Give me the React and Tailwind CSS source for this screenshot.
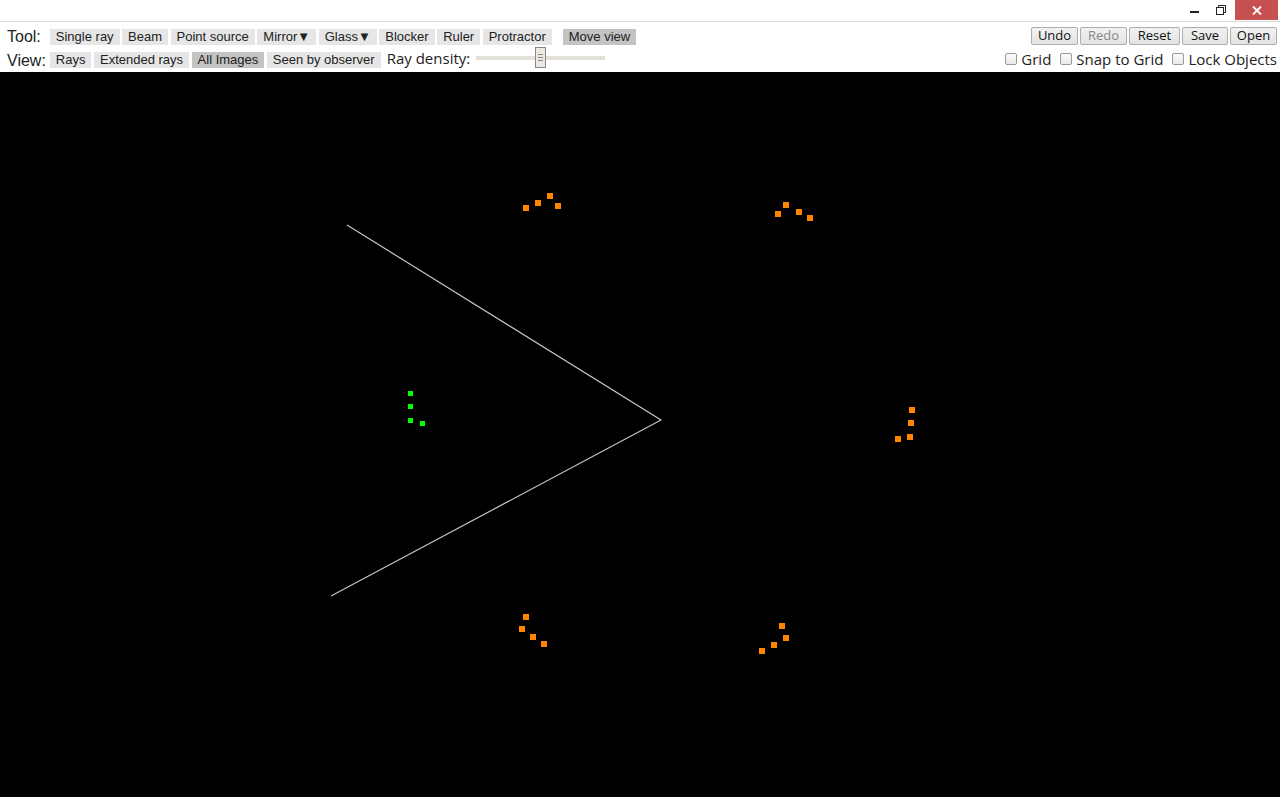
import { memo } from "react";

const SANS = { fontFamily: '"Liberation Sans", Arial, sans-serif' };
const UI = { fontFamily: '"Open Sans", "Noto Sans", sans-serif' };

const toolButtons = [
  "Single ray",
  "Beam",
  "Point source",
  "Mirror▼",
  "Glass▼",
  "Blocker",
  "Ruler",
  "Protractor",
];

const viewButtons = ["Rays", "Extended rays", "All Images", "Seen by observer"];

const actionButtons = [
  { label: "Undo", w: "w-[47px]" },
  { label: "Redo", w: "w-[47px]", disabled: true },
  { label: "Reset", w: "w-[51px]" },
  { label: "Save", w: "w-[46px]" },
  { label: "Open", w: "w-[47px]" },
];

// image dots, top-left corners in page coords
const orangeDots = [
  [523, 205], [535, 200], [547, 193], [555, 203],
  [775, 211], [783, 202], [796, 209], [807, 215],
  [909, 407], [908, 420], [907, 434], [895, 436],
  [523, 614], [519, 626], [530, 634], [541, 641],
  [779, 623], [783, 635], [771, 642], [759, 648],
];

const greenDots = [
  [408, 391], [408, 404], [408, 418], [420, 421],
];

const FlatButton = memo(({ label, active }) => (
  <span
    className={`h-[16px] leading-[16px] px-[6px] text-[13px] text-[#222] whitespace-nowrap ${
      active ? "bg-[#c3c3c3]" : "bg-[#e6e6e6]"
    }`}
    style={SANS}
  >
    {label}
  </span>
));

const Checkbox = memo(({ label }) => (
  <label className="flex items-center gap-[4px] text-[15px] text-[#222]" style={UI}>
    <span className="w-[12px] h-[12px] rounded-[2px] border border-[#9a9a9a] bg-gradient-to-b from-[#fcfcfc] to-[#e8e8e8]" />
    <span className="leading-[20px]">{label}</span>
  </label>
));

function TitleBar() {
  return (
    <div className="h-[22px] border-b border-[#dadada] flex justify-end items-start">
      <div className="w-[26px] h-[20px] flex items-center justify-center">
        <span className="block w-[9px] h-[2px] bg-[#222] mt-[4px]" />
      </div>
      <div className="w-[28px] h-[20px] flex items-center justify-center">
        <svg width="10" height="10" viewBox="0 0 10 10">
          <rect x="0.5" y="2.5" width="7" height="7" fill="none" stroke="#222" />
          <path d="M2.5 2.5V0.5H9.5V7.5H7.5" fill="none" stroke="#222" />
        </svg>
      </div>
      <div className="w-[43px] h-[20px] mr-[2px] bg-[#c75050] flex items-center justify-center">
        <svg width="10" height="9" viewBox="0 0 10 9">
          <path d="M1 0.5L9 8.5M9 0.5L1 8.5" stroke="#fff" strokeWidth="1.8" />
        </svg>
      </div>
    </div>
  );
}

function Toolbar() {
  return (
    <div className="h-[50px] flex flex-col">
      <div className="h-[25px] flex justify-between items-start">
        <div className="flex items-start ml-[7px]">
          <span className="mt-[5px] text-[16px] text-[#222] mr-[9px] leading-[19px]" style={SANS}>
            Tool:
          </span>
          <div className="mt-[7px] flex gap-[2.5px]">
            {toolButtons.map((b) => (
              <FlatButton key={b} label={b} />
            ))}
          </div>
          <div className="mt-[7px] ml-[11px] flex">
            <FlatButton label="Move view" active />
          </div>
        </div>
        <div className="flex gap-[2px] mt-[5px] mr-[3px]">
          {actionButtons.map((b) => (
            <span
              key={b.label}
              className={`${b.w} h-[18px] flex items-center justify-center rounded-[2px] border border-[#adadad] bg-gradient-to-b from-[#f2f2f2] to-[#e3e3e3] text-[13px] ${
                b.disabled ? "text-[#8a8a8a]" : "text-[#111]"
              }`}
              style={UI}
            >
              {b.label}
            </span>
          ))}
        </div>
      </div>
      <div className="h-[25px] flex justify-between items-start">
        <div className="flex items-start ml-[7px]">
          <span className="mt-[4px] text-[16px] text-[#222] mr-[4px] leading-[19px]" style={SANS}>
            View:
          </span>
          <div className="mt-[5px] flex gap-[2.5px]">
            {viewButtons.map((b) => (
              <FlatButton key={b} label={b} active={b === "All Images"} />
            ))}
          </div>
          <span className="mt-[2px] ml-[6px] text-[15px] text-[#222] leading-[19px]" style={UI}>
            Ray density:
          </span>
          <div className="relative ml-[6px] w-[129px] h-[22px] flex items-center">
            <div className="w-full h-[4px] bg-[#e4e0da]" />
            <div className="absolute left-[59px] top-0 w-[11px] h-[21px] border border-[#8a8680] bg-[#ece9e4] flex flex-col items-center justify-center gap-[2px]">
              <span className="block w-[5px] h-px bg-[#8a8680]" />
              <span className="block w-[5px] h-px bg-[#8a8680]" />
              <span className="block w-[5px] h-px bg-[#8a8680]" />
            </div>
          </div>
        </div>
        <div className="flex items-center gap-[9px] mt-[2px] mr-[3px]">
          <Checkbox label="Grid" />
          <Checkbox label="Snap to Grid" />
          <Checkbox label="Lock Objects" />
        </div>
      </div>
    </div>
  );
}

function Canvas() {
  return (
    <div className="h-[725px] bg-black">
      <svg width="1280" height="725" viewBox="0 72 1280 725" className="block">
        <polyline
          points="347,225 661,420 331,596"
          fill="none"
          stroke="#c4c4c4"
          strokeWidth="1.2"
        />
        {orangeDots.map(([x, y], i) => (
          <rect key={`o${i}`} x={x} y={y} width="6" height="6" fill="#ff8400" />
        ))}
        {greenDots.map(([x, y], i) => (
          <rect key={`g${i}`} x={x} y={y} width="5" height="5" fill="#00ff00" />
        ))}
      </svg>
    </div>
  );
}

export default function App() {
  return (
    <div className="w-[1280px] h-[800px] flex flex-col bg-white overflow-hidden">
      <TitleBar />
      <Toolbar />
      <Canvas />
      <div className="h-[3px] bg-white" />
    </div>
  );
}
